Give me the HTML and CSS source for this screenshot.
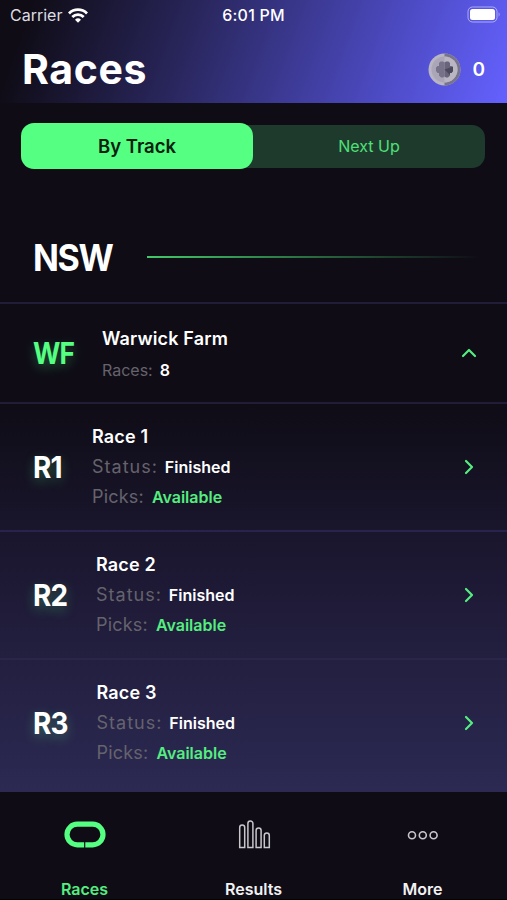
FILE: index.html
```
<!DOCTYPE html>
<html lang="en">
<head>
    <meta charset="UTF-8">
    <meta name="viewport" content="width=device-width, initial-scale=1.0">
    <title>Races</title>
    <link rel="stylesheet" href="styles.css">
</head>
<body>
    <header class="header">
        <div class="statusbar">
            <div class="carrier">
                <span>Carrier</span>
                <svg width="20" height="15" viewBox="0 0 20 15" fill="none" stroke="#fff" stroke-width="2.8">
                    <path d="M1 5.4a12.8 12.8 0 0 1 18 0"/>
                    <path d="M4.3 8.9a8.1 8.1 0 0 1 11.4 0"/>
                    <path d="M10 14.8l-3-3a4.3 4.3 0 0 1 6 0z" fill="#fff" stroke="none"/>
                </svg>
            </div>
            <span class="time">6:01 PM</span>
            <svg class="battery" width="34" height="17" viewBox="0 0 34 17">
                <rect x="1" y="1" width="29" height="15" rx="4.5" fill="none" stroke="#fff" stroke-opacity=".5"/>
                <rect x="3" y="3" width="25" height="11" rx="2.5" fill="#fff"/>
                <path d="M31.6 6.3q2 2.2 0 4.4z" fill="#fff" fill-opacity=".5"/>
            </svg>
        </div>
        <div class="titlebar">
            <h1>Races</h1>
            <div class="coins">
                <svg width="33" height="33" viewBox="0 0 33 33">
                    <circle cx="16.5" cy="16.5" r="16" fill="#b9b5c4"/>
                    <path d="M16.5.5a16 16 0 0 1 0 32z" fill="#77738c"/>
                    <circle cx="16.5" cy="16.5" r="13" fill="#aaa6b7"/>
                    <path d="M16.5 3.5a13 13 0 0 1 0 26z" fill="#b9b5c3"/>
                    <path d="M16.5 9.5L15 8.5h-2.5L11 10v3H9.5L8 14.5V18l1.5 2H11v2.5l2 2h2l1.5-1z" fill="#77728a"/>
                    <path d="M16.5 9.5L18 8.5h2.5L22 10v3h1.5l1.5 1.5V18l-1.5 2H22v2.5l-2 2h-2l-1.5-1z" fill="#69647c"/>
                    <path d="M16.5 16.5L25 13.5V18l-1.500 2H22v2z" fill="#4c485c"/>
                </svg>
                <span>0</span>
            </div>
        </div>
    </header>

    <main>
        <div class="tabs">
            <div class="tab active">By Track</div>
            <div class="tab">Next Up</div>
        </div>

        <div class="state">
            <h2>NSW</h2>
            <div class="line"></div>
        </div>

        <div class="track">
            <div class="code">WF</div>
            <div class="info">
                <div class="name">Warwick Farm</div>
                <div class="count"><span>Races:</span><b>8</b></div>
            </div>
            <svg class="chevron" width="18" height="18" viewBox="0 0 18 18"><path d="M3 12l6-6 6 6"/></svg>
        </div>

        <div class="races">
            <div class="race r1">
                <div class="code">R1</div>
                <div class="info">
                    <div class="name">Race 1</div>
                    <div class="status"><span>Status:</span><b>Finished</b></div>
                    <div class="picks"><span>Picks:</span><b>Available</b></div>
                </div>
                <svg class="chevron" width="18" height="18" viewBox="0 0 18 18"><path d="M6 3l6 6-6 6"/></svg>
            </div>
            <div class="race r2">
                <div class="code">R2</div>
                <div class="info">
                    <div class="name">Race 2</div>
                    <div class="status"><span>Status:</span><b>Finished</b></div>
                    <div class="picks"><span>Picks:</span><b>Available</b></div>
                </div>
                <svg class="chevron" width="18" height="18" viewBox="0 0 18 18"><path d="M6 3l6 6-6 6"/></svg>
            </div>
            <div class="race r3">
                <div class="code">R3</div>
                <div class="info">
                    <div class="name">Race 3</div>
                    <div class="status"><span>Status:</span><b>Finished</b></div>
                    <div class="picks"><span>Picks:</span><b>Available</b></div>
                </div>
                <svg class="chevron" width="18" height="18" viewBox="0 0 18 18"><path d="M6 3l6 6-6 6"/></svg>
            </div>
        </div>
    </main>

    <nav class="nav">
        <div class="item selected">
            <svg width="42" height="30" viewBox="0 0 42 30">
                <rect x="3" y="5.2" width="36" height="20.6" rx="10.3" fill="none" stroke="#54ff82" stroke-width="5.2"/>
                <path d="M20.7 21.5V29" stroke="#0f0c16" stroke-width="1.2"/>
            </svg>
            <span>Races</span>
        </div>
        <div class="item">
            <svg width="34" height="30" viewBox="0 0 34 30" fill="none" stroke="#c8c7cb" stroke-width="1.5">
                <path d="M2.7 28.5v-20a2.5 2.5 0 0 1 5 0v20z"/>
                <path d="M10.900 28.5v-24a2.5 2.5 0 0 1 5 0v24z"/>
                <path d="M19.100 28.5v-17a2.5 2.5 0 0 1 5 0v17z"/>
                <path d="M27.300 28.5v-12a2.5 2.5 0 0 1 5 0v12z"/>
            </svg>
            <span>Results</span>
        </div>
        <div class="item">
            <svg width="34" height="30" viewBox="0 0 34 30" fill="none" stroke="#c8c7cb" stroke-width="1.6">
                <circle cx="6" cy="16.2" r="3.5"/>
                <circle cx="16.8" cy="16.2" r="3.5"/>
                <circle cx="27.6" cy="16.2" r="3.5"/>
            </svg>
            <span>More</span>
        </div>
    </nav>
</body>
</html>
```
FILE: styles.css
```
* {
    box-sizing: border-box;
}
body {
    margin: 0;
    height: 900px;
    overflow: hidden;
    display: flex;
    flex-direction: column;
    background-color: #0f0c16;
    color: #fff;
    font-family: Inter, sans-serif;
}
svg {
    display: block;
    flex-shrink: 0;
}
.header {
    height: 103px;
    background: linear-gradient(110deg, #0f0c16 6%, #28255a 36%, #3a388e 56%, #4e4cc6 77%, #6461ff 100%);
}
.statusbar {
    display: grid;
    grid-template-columns: 1fr auto 1fr;
    align-items: center;
    height: 30px;
    padding: 0 6px 0 10px;
    font-size: 16px;
}
.carrier {
    display: flex;
    align-items: center;
    gap: 6px;
    color: #dddce2;
}
.time {
    font-weight: 500;
    letter-spacing: 0.2px;
    margin-left: -4px;
}
.battery {
    justify-self: end;
    margin-top: -2px;
}
.titlebar {
    display: flex;
    justify-content: space-between;
    align-items: center;
    height: 78px;
    padding: 0 22px;
}
h1 {
    margin: 0;
    font-size: 41px;
    font-weight: 700;
    letter-spacing: 0.6px;
}
.coins {
    display: flex;
    align-items: center;
    gap: 11px;
    font-size: 19px;
    font-weight: 600;
}
.tabs {
    display: flex;
    align-items: center;
    margin: 20px 22px 0 21px;
    height: 46px;
}
.tab {
    flex: 1;
    height: 43px;
    line-height: 43px;
    text-align: center;
    font-size: 16px;
    color: #4fe078;
    background-color: #1e3a2d;
    border-radius: 0 13px 13px 0;
}
.tab.active {
    height: 46px;
    line-height: 46px;
    font-size: 18.5px;
    font-weight: 600;
    color: #06210f;
    background-color: #54ff82;
    border-radius: 13px;
    z-index: 1;
}
.tab:last-child {
    margin-left: -14px;
    padding-left: 14px;
    flex: 0 0 246px;
}
.state {
    display: flex;
    align-items: center;
    height: 90px;
    margin-top: 43px;
    padding: 0 27px 0 33px;
}
h2 {
    margin: 0;
    width: 114px;
    font-size: 37px;
    font-weight: 700;
    letter-spacing: -1.5px;
    transform: scaleX(0.92);
    transform-origin: left;
}
.line {
    flex: 1;
    height: 2px;
    background: linear-gradient(90deg, #43c969, transparent);
}
.track, .race {
    display: flex;
    align-items: center;
    padding: 0 29px 0 33px;
    border-top: 2px solid #211d38;
}
.track {
    height: 100px;
}
.code {
    width: 69px;
    font-size: 30px;
    font-weight: 700;
    letter-spacing: -1px;
    text-shadow: 0 4px 12px rgba(84, 255, 130, 0.3);
    transform: scaleX(0.93);
    transform-origin: left;
}
.track .code {
    color: #54ff82;
    transform: scaleX(0.88);
}
.info {
    flex: 1;
}
.name {
    font-size: 18px;
    font-weight: 600;
    line-height: 30px;
    letter-spacing: 0.15px;
}
.track .name {
    padding-top: 4px;
}
.count, .status, .picks {
    display: flex;
    align-items: center;
    color: #65636c;
}
.count {
    height: 32px;
    gap: 7px;
    font-size: 16px;
}
.status, .picks {
    height: 30px;
    gap: 8px;
    font-size: 18px;
}
.race .info {
    padding-bottom: 1px;
}
.status span {
    letter-spacing: 1px;
}
.status b {
    margin-left: -1px;
}
.picks span {
    letter-spacing: 0.2px;
}
b {
    color: #fff;
    font-size: 16px;
    font-weight: 600;
}
.picks b {
    color: #54ee80;
}
.chevron {
    fill: none;
    stroke: #54ee80;
    stroke-width: 2.2;
    stroke-linecap: round;
    stroke-linejoin: round;
}
.races {
    height: 390px;
    background: linear-gradient(180deg, #0f0c16 0%, #1d1934 45%, #2c2953 100%);
}
.race {
    height: 128px;
}
.r2 {
    border-color: #28234c;
}
.r3 {
    border-color: #2a264a;
}
.r1 .code {
    width: 59px;
}
.r2 .code {
    width: 63px;
}
.r3 .code {
    width: 63.5px;
}
.nav {
    flex: 1;
    display: grid;
    grid-template-columns: repeat(3, 1fr);
    background-color: #0f0c16;
    border-bottom: 2px solid #000;
}
.item {
    display: flex;
    flex-direction: column;
    align-items: center;
    padding-top: 27px;
    color: #f2f2f3;
    font-size: 16px;
    font-weight: 600;
}
.item span {
    margin-top: 30px;
    line-height: 20px;
}
.selected {
    color: #54ee80;
}
```
